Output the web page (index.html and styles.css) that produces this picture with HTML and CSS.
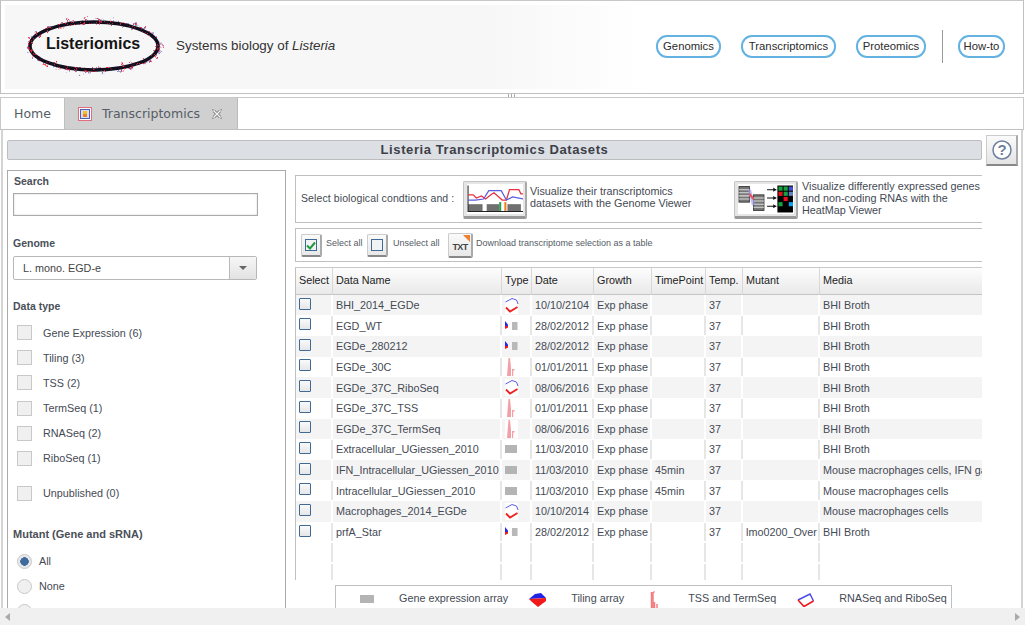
FILE: index.html
```html
<!DOCTYPE html>
<html lang="en">
<head>
<meta charset="utf-8">
<title>Listeriomics</title>
<link rel="stylesheet" href="styles.css">
</head>
<body>
<svg class="defs" width="0" height="0" aria-hidden="true">
  <defs>
    <filter id="rough" x="-10%" y="-25%" width="120%" height="150%" color-interpolation-filters="sRGB">
      <feTurbulence type="fractalNoise" baseFrequency="0.22" numOctaves="3" seed="7" result="n"/>
      <feDisplacementMap in="SourceGraphic" in2="n" scale="18" xChannelSelector="R" yChannelSelector="G"/>
    </filter>
    <symbol id="i-array" viewBox="0 0 14 10"><rect x="0" y="1" width="12" height="8" fill="#b4b4b4"/></symbol>
    <symbol id="i-tiling" viewBox="0 0 14 10"><path d="M0 0 3 3.5 3 5 0 5Z" fill="#2a2ae0"/><path d="M0 5 3 5 3 6.5 0 8Z" fill="#f01818"/><rect x="7" y="1" width="5.5" height="8" fill="#b8b8b8"/></symbol>
    <symbol id="i-tss" viewBox="0 0 14 18"><rect width="13" height="18" fill="#fff"/><path d="M2 18 3 6 3.5 0H5L6 10V18Z" fill="#f2a0a4"/><path d="M7 18V11H9.5V12.5H8.2V18Z" fill="#f2a0a4"/></symbol>
    <symbol id="i-rna" viewBox="0 0 14 17"><rect width="13" height="17" fill="#fff"/><path d="M0.5 5 7 1.5 11.5 3 13 7" stroke="#5a5af0" stroke-width="1" fill="none"/><path d="M1 10.5 5 14.5 12.5 10" stroke="#ee2020" stroke-width="1.8" fill="none"/></symbol>
  </defs>
</svg>

<header class="banner">
  <div class="brand">
    <div class="logo">
      <svg class="logo-ring" width="150" height="64" viewBox="0 0 150 64" aria-hidden="true">
        <ellipse cx="74" cy="32" rx="65" ry="24" fill="none" stroke="#ee4555" stroke-width="1.1" filter="url(#rough)"/>
        <ellipse cx="74" cy="32" rx="66" ry="25" fill="none" stroke="#8a9ade" stroke-width="1.3" stroke-dasharray="10 6" filter="url(#rough)"/>
        <ellipse cx="74" cy="32" rx="64" ry="24" fill="none" stroke="#101020" stroke-width="3.5"/>
        <ellipse cx="74" cy="32" rx="64" ry="24" fill="none" stroke="#f02030" stroke-width="1.3" stroke-dasharray="3 4" filter="url(#rough)"/>
      </svg>
      <span class="logo-text">Listeriomics</span>
    </div>
    <p class="tagline">Systems biology of <em>Listeria</em></p>
  </div>
  <nav class="topnav">
    <a class="pill pill-g">Genomics</a>
    <a class="pill pill-t">Transcriptomics</a>
    <a class="pill pill-p">Proteomics</a>
    <span class="nav-sep"></span>
    <a class="pill pill-h">How-to</a>
  </nav>
</header>

<div class="splitter"><span class="grip"></span></div>

<div class="tabbar">
  <div class="tab tab-home">Home</div>
  <div class="tab tab-active">
    <svg class="tab-icon" width="14" height="14" viewBox="0 0 14 14" aria-hidden="true"><rect x="0.5" y="0.5" width="13" height="13" fill="#fff" stroke="#e07080"/><rect x="2.5" y="2.5" width="9" height="9" fill="#d8dcf0" stroke="#5060b0"/><rect x="5" y="4" width="4" height="3" fill="#f4c020"/><rect x="5" y="7" width="4" height="3" fill="#f08020"/></svg>
    <span>Transcriptomics</span>
    <svg class="tab-close" width="10" height="10" viewBox="0 0 10 10" aria-hidden="true"><path d="M0 2V0H2M8 0H10V2M10 8V10H8M2 10H0V8" stroke="#888" fill="none"/><path d="M2 2 8 8M8 2 2 8" stroke="#777" stroke-width="3"/><path d="M2 2 8 8M8 2 2 8" stroke="#f4f4f4" stroke-width="1.4"/></svg>
  </div>
</div>

<main class="content">
  <div class="title-row">
    <h1 class="page-title">Listeria Transcriptomics Datasets</h1>
    <button class="help" aria-label="Help"><svg width="22" height="22" viewBox="0 0 22 22" aria-hidden="true"><circle cx="11" cy="11" r="9" fill="#fff" stroke="#6d7f9c" stroke-width="1.5"/><text x="11" y="16" text-anchor="middle" class="help-q">?</text></svg></button>
  </div>

  <div class="columns">
    <aside class="filters">
      <label class="f-label f-search">Search</label>
      <input class="search" type="text">
      <label class="f-label f-genome">Genome</label>
      <div class="select"><span class="select-value">L. mono. EGD-e</span><span class="select-btn"><i class="caret"></i></span></div>
      <div class="f-label f-type">Data type</div>
      <ul class="checks">
        <li><span class="cb"></span>Gene Expression (6)</li>
        <li><span class="cb"></span>Tiling (3)</li>
        <li><span class="cb"></span>TSS (2)</li>
        <li><span class="cb"></span>TermSeq (1)</li>
        <li><span class="cb"></span>RNASeq (2)</li>
        <li><span class="cb"></span>RiboSeq (1)</li>
        <li class="check-gap"><span class="cb"></span>Unpublished (0)</li>
      </ul>
      <div class="f-label f-mutant">Mutant (Gene and sRNA)</div>
      <ul class="radios">
        <li><span class="rb rb-on"></span>All</li>
        <li><span class="rb"></span>None</li>
        <li><span class="rb"></span></li>
      </ul>
    </aside>

    <section class="data">
      <div class="box box-views">
        <span class="views-lead">Select biological condtions and :</span>
        <button class="img-btn img-btn-g" aria-label="Genome Viewer">
          <svg width="56" height="30" viewBox="0 0 54 28" aria-hidden="true">
            <rect x="1" y="19" width="14" height="7" fill="#707070"/><rect x="19" y="19" width="12" height="7" fill="#707070"/><rect x="39" y="19" width="13" height="7" fill="#707070"/>
            <rect x="31" y="17" width="2" height="9" fill="#28a050"/><rect x="36" y="17" width="2" height="9" fill="#f08020"/>
            <path d="M1 1V26H54" stroke="#222" fill="none"/>
            <path d="M1 10H6L9 13 14 11 18 14 23 10 26 8 34 15 38 15 41 5H50L52 9H54" stroke="#e83040" stroke-width="1.2" fill="none"/>
            <path d="M1 15H8L16 14 21 6 33 6 38 15 44 12 54 14" stroke="#5c5ce0" stroke-width="1.2" fill="none"/>
          </svg>
        </button>
        <p class="views-text views-g">Visualize their transcriptomics<br>datasets with the Genome Viewer</p>
        <button class="img-btn img-btn-h" aria-label="HeatMap Viewer">
          <svg width="56" height="30" viewBox="0 0 54 28" aria-hidden="true">
            <rect x="1" y="2" width="10" height="15" fill="#777" stroke="#444"/><path d="M1 5H11M1 8H11M1 11H11M1 14H11" stroke="#ddd"/>
            <rect x="15" y="10" width="10" height="15" fill="#777" stroke="#444"/><path d="M15 13H25M15 16H25M15 19H25M15 22H25" stroke="#ddd"/>
            <path d="M11 5 15 20" stroke="#a0a0ee" stroke-width="3" opacity=".7"/><path d="M11 9 15 14" stroke="#ee5060" stroke-width="2"/>
            <path d="M28 5H37M28 13H37M28 21H37" stroke="#111"/><path d="M34 3 37 5 34 7ZM34 11 37 13 34 15ZM34 19 37 21 34 23Z" fill="#111"/>
            <rect x="38" y="1" width="15" height="26" fill="#000"/>
            <rect x="39" y="2" width="4" height="4" fill="#18a040"/><rect x="44" y="2" width="4" height="4" fill="#18a040"/><rect x="49" y="2" width="4" height="4" fill="#4050d0"/>
            <rect x="39" y="7" width="4" height="4" fill="#e81020"/><rect x="44" y="7" width="4" height="4" fill="#18a040"/><rect x="49" y="7" width="4" height="4" fill="#6080c0"/>
            <rect x="44" y="12" width="4" height="4" fill="#e81020"/><rect x="39" y="17" width="4" height="4" fill="#18a040"/><rect x="49" y="17" width="4" height="4" fill="#10a0f0"/>
          </svg>
        </button>
        <p class="views-text views-h">Visualize differently expressed genes<br>and non-coding RNAs with the<br>HeatMap Viewer</p>
      </div>

      <div class="box box-tools">
        <button class="tool" aria-label="Select all"><span class="tool-box tool-box-on"><svg width="10" height="9" viewBox="0 0 10 9" aria-hidden="true"><path d="M1 4.5 4 7.5 9 1.5" stroke="#1f9a3c" stroke-width="2" fill="none"/></svg></span></button>
        <span class="tool-text t-sel">Select all</span>
        <button class="tool" aria-label="Unselect all"><span class="tool-box"></span></button>
        <span class="tool-text t-unsel">Unselect all</span>
        <button class="tool tool-txt" aria-label="Download"><i class="txt-corner"></i><span class="txt-label">TXT</span></button>
        <span class="tool-text t-dl">Download transcriptome selection as a table</span>
      </div>

      <div class="table-wrap">
        <table class="grid">
          <colgroup><col class="c1"><col class="c2"><col class="c3"><col class="c4"><col class="c5"><col class="c6"><col class="c7"><col class="c8"><col class="c9"></colgroup>
          <thead><tr><th>Select</th><th>Data Name</th><th>Type</th><th>Date</th><th>Growth</th><th>TimePoint</th><th>Temp.</th><th>Mutant</th><th>Media</th></tr></thead>
          <tbody>
            <tr><td><span class="tick"></span></td><td>BHI_2014_EGDe</td><td><svg class="ty ty-r"><use href="#i-rna"/></svg></td><td>10/10/2104</td><td>Exp phase</td><td></td><td>37</td><td></td><td>BHI Broth</td></tr>
            <tr><td><span class="tick"></span></td><td>EGD_WT</td><td><svg class="ty ty-a"><use href="#i-tiling"/></svg></td><td>28/02/2012</td><td>Exp phase</td><td></td><td>37</td><td></td><td>BHI Broth</td></tr>
            <tr><td><span class="tick"></span></td><td>EGDe_280212</td><td><svg class="ty ty-a"><use href="#i-tiling"/></svg></td><td>28/02/2012</td><td>Exp phase</td><td></td><td>37</td><td></td><td>BHI Broth</td></tr>
            <tr><td><span class="tick"></span></td><td>EGDe_30C</td><td><svg class="ty ty-t"><use href="#i-tss"/></svg></td><td>01/01/2011</td><td>Exp phase</td><td></td><td>37</td><td></td><td>BHI Broth</td></tr>
            <tr><td><span class="tick"></span></td><td>EGDe_37C_RiboSeq</td><td><svg class="ty ty-r"><use href="#i-rna"/></svg></td><td>08/06/2016</td><td>Exp phase</td><td></td><td>37</td><td></td><td>BHI Broth</td></tr>
            <tr><td><span class="tick"></span></td><td>EGDe_37C_TSS</td><td><svg class="ty ty-t"><use href="#i-tss"/></svg></td><td>01/01/2011</td><td>Exp phase</td><td></td><td>37</td><td></td><td>BHI Broth</td></tr>
            <tr><td><span class="tick"></span></td><td>EGDe_37C_TermSeq</td><td><svg class="ty ty-t"><use href="#i-tss"/></svg></td><td>08/06/2016</td><td>Exp phase</td><td></td><td>37</td><td></td><td>BHI Broth</td></tr>
            <tr><td><span class="tick"></span></td><td>Extracellular_UGiessen_2010</td><td><svg class="ty ty-a"><use href="#i-array"/></svg></td><td>11/03/2010</td><td>Exp phase</td><td></td><td>37</td><td></td><td>BHI Broth</td></tr>
            <tr><td><span class="tick"></span></td><td>IFN_Intracellular_UGiessen_2010</td><td><svg class="ty ty-a"><use href="#i-array"/></svg></td><td>11/03/2010</td><td>Exp phase</td><td>45min</td><td>37</td><td></td><td>Mouse macrophages cells, IFN gamma</td></tr>
            <tr><td><span class="tick"></span></td><td>Intracellular_UGiessen_2010</td><td><svg class="ty ty-a"><use href="#i-array"/></svg></td><td>11/03/2010</td><td>Exp phase</td><td>45min</td><td>37</td><td></td><td>Mouse macrophages cells</td></tr>
            <tr><td><span class="tick"></span></td><td>Macrophages_2014_EGDe</td><td><svg class="ty ty-r"><use href="#i-rna"/></svg></td><td>10/10/2014</td><td>Exp phase</td><td></td><td>37</td><td></td><td>Mouse macrophages cells</td></tr>
            <tr><td><span class="tick"></span></td><td>prfA_Star</td><td><svg class="ty ty-a"><use href="#i-tiling"/></svg></td><td>28/02/2012</td><td>Exp phase</td><td></td><td>37</td><td>lmo0200_Over</td><td>BHI Broth</td></tr>
            <tr class="empty"><td></td><td></td><td></td><td></td><td></td><td></td><td></td><td></td><td></td></tr>
            <tr class="empty"><td></td><td></td><td></td><td></td><td></td><td></td><td></td><td></td><td></td></tr>
          </tbody>
        </table>
      </div>

      <div class="legend">
        <svg class="lg lg-a" viewBox="0 0 14 8"><rect width="14" height="8" fill="#b4b4b4"/></svg><span class="lg-t lg-t1">Gene expression array</span>
        <svg class="lg lg-b" viewBox="0 0 17 14"><path d="M0 6 6 1 12 0 17 5 0 6Z" fill="#2222e8"/><path d="M0 6 17 5 17 8 9 14 3 9Z" fill="#f01818"/></svg><span class="lg-t lg-t2">Tiling array</span>
        <svg class="lg lg-c" viewBox="0 0 9 18"><path d="M1.5 18V1M3 18V1M4.5 18V11M7 18V13" stroke="#f2787c" stroke-width="1.4" fill="none"/><path d="M3 1H5" stroke="#f2787c"/></svg><span class="lg-t lg-t3">TSS and TermSeq</span>
        <svg class="lg lg-d" viewBox="0 0 17 14"><path d="M1 7 13 1 16.5 8" stroke="#4848f0" stroke-width="1.4" fill="none"/><path d="M1 7 7 13.5 16.5 8" stroke="#f01818" stroke-width="1.6" fill="none"/></svg><span class="lg-t">RNASeq and RiboSeq</span>
      </div>
    </section>
  </div>
</main>

<footer class="hscroll">
  <span class="arrow arrow-l"></span>
  <span class="arrow arrow-r"></span>
</footer>
</body>
</html>
```

FILE: styles.css
```css
* { box-sizing: border-box; }
html, body { margin: 0; height: 625px; overflow: hidden; background: #fff; }
body {
  display: flex;
  flex-direction: column;
  font-family: "Liberation Sans", Arial, sans-serif;
  font-size: 10.8px;
  color: #444a54;
}
.defs { display: block; height: 0; flex: none; }
button { padding: 0; font: inherit; }
ul { list-style: none; margin: 0; padding: 0; }
p { margin: 0; }

/* Banner */
.banner {
  flex: none;
  height: 94px;
  margin-right: 1px;
  border: 1px solid #c0c0c0;
  border-top-color: #c8c8c8;
  padding: 4px 0 0 4px;
  display: flex;
  justify-content: space-between;
}
.brand {
  width: 640px;
  height: 84px;
  background: linear-gradient(90deg, #f7f7f7 75%, #fff);
  display: flex;
  align-items: flex-start;
}
.logo { position: relative; width: 150px; height: 64px; margin: 9px 0 0 15px; flex: none; }
.logo-ring { display: block; }
.logo-text {
  position: absolute;
  left: 26px;
  top: 21px;
  font-size: 16px;
  font-weight: bold;
  color: #151515;
}
.tagline { margin: 33px 0 0 6px; font-size: 13.4px; color: #333; }

.topnav { display: flex; align-items: flex-start; padding: 25px 18px 0 0; }
.pill {
  height: 23px;
  margin-top: 5px;
  border: 2px solid #64b2e2;
  border-radius: 11px;
  background: #fff;
  color: #2c2c2c;
  font-size: 11.3px;
  line-height: 18px;
  text-align: center;
}
.pill-g { width: 65px; }
.pill-t { width: 95px; margin-left: 20px; }
.pill-p { width: 70px; margin-left: 20px; }
.pill-h { width: 47px; }
.nav-sep { width: 1px; height: 33px; background: #999; margin: 0 15px 0 16px; }

.splitter { flex: none; height: 3px; position: relative; }
.grip {
  position: absolute;
  left: 508px;
  top: 0;
  width: 9px;
  height: 3px;
  background: repeating-linear-gradient(90deg, #aaa 0 1px, transparent 1px 3px);
}

/* Tabs */
.tabbar {
  flex: none;
  height: 33px;
  margin-right: 1px;
  border: 1px solid #c8c8c8;
  border-bottom: 1px solid #c0c0c0;
  display: flex;
  font-family: "DejaVu Sans", sans-serif;
  font-size: 12.5px;
  color: #555c66;
}
.tab { height: 31px; display: flex; align-items: center; }
.tab-home { width: 64px; padding-left: 13px; border-right: 1px solid #c0c0c0; }
.tab-active { width: 173px; padding-left: 13px; background: #d0d0d0; border-right: 1px solid #bbb; }
.tab-icon { margin-right: 10px; }
.tab-close { margin-left: 12px; }

/* Content */
.content {
  flex: 1;
  min-height: 0;
  overflow: hidden;
  margin-right: 2px;
  border-left: 2px solid #d4d4d4;
  border-right: 2px solid #d4d4d4;
  margin-left: 1px;
  padding: 5px 1px 0 4px;
}
.title-row { display: flex; align-items: flex-start; }
.page-title {
  flex: none;
  width: 975px;
  height: 20px;
  margin: 5px 0 0;
  border: 1px solid #bdbdbd;
  border-radius: 2px;
  background: #dcdfe3;
  font-size: 13px;
  letter-spacing: .6px;
  line-height: 18px;
  text-align: center;
  color: #3c4048;
}
.help {
  width: 32px;
  height: 31px;
  margin-left: 4px;
  border: 1px solid #ccc;
  border-bottom: 2px solid #888;
  border-right: 2px solid #aaa;
  background: linear-gradient(#fafafa, #e4e4e4);
  display: flex;
  align-items: center;
  justify-content: center;
}
.help-q { font: bold 15px "Liberation Sans", sans-serif; fill: #6d7f9c; }

.columns { display: flex; align-items: flex-start; margin-top: 4px; height: 444px; }

/* Filters */
.filters {
  flex: none;
  width: 279px;
  height: 460px;
  border: 1px solid #aaa;
  padding: 0 0 0 5px;
}
.f-label { display: block; color: #4a4f58; line-height: 13px; font-weight: bold; font-size: 10.5px; }
.f-search { margin-top: 4px; margin-left: 1px; }
.search {
  display: block;
  width: 245px;
  height: 23px;
  margin-top: 5px;
  border: 1px solid #aaa;
  box-shadow: inset 0 0 2px #ccc;
}
.f-genome { margin-top: 21px; }
.select {
  width: 244px;
  height: 24px;
  margin-top: 6px;
  border: 1px solid #b8b8b8;
  border-radius: 2px;
  display: flex;
  justify-content: space-between;
  align-items: center;
  padding-left: 9px;
  color: #444;
}
.select-value { padding-bottom: 1px; }
.select-btn {
  width: 27px;
  height: 22px;
  border-left: 1px solid #bbb;
  background: linear-gradient(#f7f7f7, #e2e2e2);
  display: flex;
  align-items: center;
  justify-content: center;
}
.caret { width: 0; height: 0; border: 4px solid transparent; border-top: 4px solid #666; border-bottom: 0; }
.f-type { margin-top: 20px; }
.checks { margin-top: 12px; margin-left: 4px; }
.checks li { display: flex; align-items: center; height: 15px; margin-bottom: 10.2px; }
.checks li.check-gap { margin-top: 20px; }
.cb {
  width: 15px;
  height: 15px;
  margin-right: 11px;
  border: 1px solid #c8c8c8;
  background: #f0f0f0;
}
.f-mutant { margin-top: 27px; font-size: 11px; }
.radios { margin-top: 13px; margin-left: 4px; }
.radios li { display: flex; align-items: center; height: 15px; margin-bottom: 10px; }
.rb {
  width: 15px;
  height: 15px;
  margin-right: 7px;
  border: 1px solid #c8c8c8;
  border-radius: 50%;
  background: #f0f0f0;
}
.rb-on { background: radial-gradient(circle, #3f6a9e 0 4px, #e8e8e8 4.5px); }

/* Data column */
.data { flex: none; width: 687px; margin-left: 9px; overflow: hidden; height: 444px; }
.box { width: 760px; border: 1px solid #c0c0c0; border-width: 1px 0 1px 1px; }
.box-views { height: 48px; margin-top: 5px; display: flex; align-items: flex-start; }
.views-lead { margin: 16px 0 0 5px; width: 162px; flex: none; font-size: 10.5px; letter-spacing: .1px; }
.img-btn {
  flex: none;
  width: 64px;
  height: 38px;
  margin-top: 5px;
  border: 1px solid #c4c4c4;
  border-right: 2px solid #aaa;
  border-bottom: 3px solid #999;
  border-radius: 2px;
  background: #e6e6e6;
  display: flex;
  align-items: center;
  justify-content: center;
}
.img-btn svg { background: #fff; }
.views-text { flex: none; margin-top: 9px; font-size: 10.8px; line-height: 12px; }
.views-g { width: 204px; margin-left: 3px; }
.views-h { margin-left: 4px; margin-top: 4px; }
.box-tools { height: 34px; margin-top: 5px; display: flex; align-items: flex-start; }
.tool {
  flex: none;
  width: 21px;
  height: 23px;
  margin-top: 5px;
  border: 1px solid #ccc;
  border-right: 2px solid #aaa;
  border-bottom: 2px solid #888;
  border-radius: 2px;
  background: linear-gradient(#fafafa, #e8e8e8);
  display: flex;
  align-items: center;
  justify-content: center;
}
.tool:first-child { margin-left: 5px; }
.tool-box {
  width: 12px;
  height: 12px;
  border: 1px solid #3f6a96;
  background: #f0f2f4;
  display: flex;
  align-items: center;
  justify-content: center;
}
.tool-text { flex: none; margin-top: 8px; font-size: 9px; line-height: 12px; color: #565c66; }
.t-sel { margin-left: 4px; width: 41px; }
.t-unsel { margin-left: 5px; width: 55px; }
.t-dl { margin-left: 3px; }
.tool-txt { width: 25px; height: 25px; margin-top: 4px; position: relative; }
.txt-corner { position: absolute; right: 1px; top: 1px; width: 0; height: 0; border-top: 7px solid #f08030; border-left: 7px solid transparent; }
.txt-label { font-size: 9px; font-weight: bold; color: #444; letter-spacing: -.6px; margin-top: 4px; }

/* Table */
.table-wrap { margin-top: 5px; width: 687px; height: 313px; overflow: hidden; border-left: 1px solid #c0c0c0; border-top: 1px solid #c8c8c8; }
.grid { table-layout: fixed; width: 687px; border-collapse: separate; border-spacing: 0; font-size: 10.8px; }
.c1 { width: 37px; } .c2 { width: 169px; } .c3 { width: 30px; } .c4 { width: 62px; } .c5 { width: 58px; }
.c6 { width: 54px; } .c7 { width: 37px; } .c8 { width: 77px; } .c9 { width: 163px; }
.grid th {
  height: 26.7px;
  padding: 0 0 2px 3px;
  text-align: left;
  font-weight: normal;
  color: #222;
  white-space: nowrap;
  background: linear-gradient(#fdfdfd, #e9e9e9);
  border-right: 1px solid #d8d8d8;
  border-bottom: 1px solid #c4c4c4;
}
.grid th:last-child { border-right: 0; }
.grid td {
  height: 20.65px;
  padding: 0 0 0 3px;
  white-space: nowrap;
  overflow: hidden;
  line-height: 12px;
  vertical-align: middle;
  background: linear-gradient(#e6e6e6, #e6e6e6) right center / 2px calc(100% - 2px) no-repeat #fff;
}
.grid tbody tr:nth-child(odd):not(.empty) td {
  background: linear-gradient(#fff, #fff) right center / 2px 100% no-repeat #f4f4f4;
}
.grid tbody tr td:last-child, .grid tbody tr:nth-child(odd):not(.empty) td:last-child { background-size: 0 0; }
.tick {
  display: block;
  width: 12px;
  height: 12px;
  border: 1px solid #3f6a96;
  border-radius: 1px;
  background: linear-gradient(#fafafa, #e6e6e6);
  margin-top: -3px;
}
.ty { display: block; width: 14px; }
.ty-r { height: 17px; }
.ty-a { height: 10px; }
.ty-t { height: 18px; }

/* Legend */
.legend {
  width: 617px;
  height: 40px;
  margin: 5px 0 0 40px;
  border: 1px solid #c0c0c0;
  display: flex;
  align-items: flex-start;
  padding-top: 6px;
}
.lg { flex: none; display: block; }
.lg-a { width: 14px; height: 8px; margin: 3px 0 0 24px; }
.lg-b { width: 17px; height: 14px; margin: 1px 0 0 21px; }
.lg-c { width: 9px; height: 18px; margin: -1px 0 0 26px; }
.lg-d { width: 17px; height: 14px; margin: 1px 0 0 21px; }
.lg-t { flex: none; margin-left: 25px; font-size: 10.8px; line-height: 12px; }
.lg-t3 { margin-left: 29px; }

/* Bottom scrollbar */
.hscroll {
  flex: none;
  height: 17px;
  background: #f0f0f0;
  display: flex;
  justify-content: space-between;
  align-items: center;
  padding: 0 5px;
  position: relative;
  z-index: 1;
}
.arrow { width: 0; height: 0; border: 4px solid transparent; }
.arrow-l { border-right: 5px solid #aaa; border-left: 0; }
.arrow-r { border-left: 5px solid #aaa; border-right: 0; }
```
